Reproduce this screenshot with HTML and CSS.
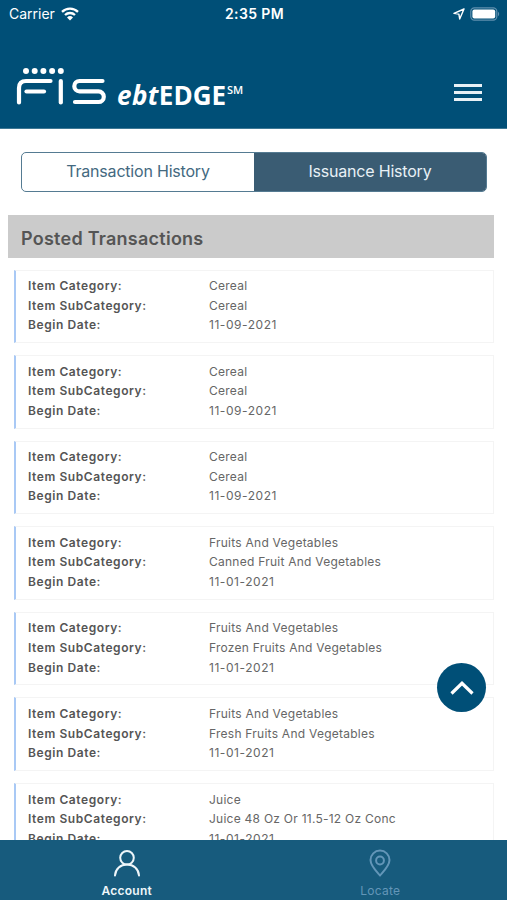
FILE: index.html
```html
<!DOCTYPE html>
<html lang="en">
<head>
    <meta charset="UTF-8">
    <meta name="viewport" content="width=device-width, initial-scale=1.0">
    <title>ebtEDGE</title>
    <link rel="stylesheet" href="styles.css">
</head>
<body>
    <header class="header">
        <div class="status-bar">
            <div class="carrier">
                <span>Carrier</span>
                <svg width="18" height="14" viewBox="0 0 18 14" fill="none" stroke="#fff" stroke-width="2.3">
                    <path d="M1 4.8a11.5 11.5 0 0 1 16 0"/>
                    <path d="M4 8a7.3 7.3 0 0 1 10 0"/>
                    <path d="M9 13.6L6 10.5a4.4 4.4 0 0 1 6 0z" fill="#fff" stroke="none"/>
                </svg>
            </div>
            <span class="time">2:35 PM</span>
            <div class="battery">
                <svg width="12" height="12" viewBox="0 0 12 12" fill="none" stroke="#fff" stroke-width="1.4" stroke-linejoin="round">
                    <path d="M11 1L1 5.4l4.9.7.8 4.9z"/>
                </svg>
                <svg width="30" height="14" viewBox="0 0 30 14">
                    <rect x=".8" y=".8" width="26" height="12.4" rx="3.6" fill="none" stroke="#5f90ae" stroke-width="1.2"/>
                    <rect x="2.4" y="2.4" width="22.8" height="9.2" rx="2" fill="#fff"/>
                    <path d="M28 4.8a2.6 2.6 0 0 1 0 4.4z" fill="#5f90ae"/>
                </svg>
            </div>
        </div>

        <div class="brand-bar">
            <div class="brand">
                <svg width="90" height="38" viewBox="0 0 90 38" fill="none" stroke="#fff" stroke-width="4.2" stroke-linecap="round" stroke-linejoin="round">
                    <g fill="#fff" stroke="none">
                        <circle cx="10" cy="4" r="3"/>
                        <circle cx="18.7" cy="4" r="3"/>
                        <circle cx="27.4" cy="4" r="3"/>
                        <circle cx="36.1" cy="4" r="3"/>
                        <circle cx="44.8" cy="4" r="3"/>
                    </g>
                    <path d="M3 35.5V21q0-7 7-7h24.500"/>
                    <path d="M10.500 24.500h17.500"/>
                    <path d="M44.800 14v21.500"/>
                    <path d="M86.500 14H63.500a5.200 5.200 0 0 0 0 10.400h19a5.200 5.200 0 0 1 0 10.600H59"/>
                </svg>
                <span class="brand-name"><em>ebt</em>EDGE<sup>SM</sup></span>
            </div>
            <div class="menu">
                <span></span>
                <span></span>
                <span></span>
            </div>
        </div>
    </header>

    <main class="content">
        <div class="tabs">
            <div class="tab">Transaction History</div>
            <div class="tab active">Issuance History</div>
        </div>

        <h2 class="section-title">Posted Transactions</h2>

        <div class="list">
            <dl class="card">
                <dt>Item Category:</dt><dd>Cereal</dd>
                <dt>Item SubCategory:</dt><dd>Cereal</dd>
                <dt>Begin Date:</dt><dd class="date">11-09-2021</dd>
            </dl>
            <dl class="card">
                <dt>Item Category:</dt><dd>Cereal</dd>
                <dt>Item SubCategory:</dt><dd>Cereal</dd>
                <dt>Begin Date:</dt><dd class="date">11-09-2021</dd>
            </dl>
            <dl class="card">
                <dt>Item Category:</dt><dd>Cereal</dd>
                <dt>Item SubCategory:</dt><dd>Cereal</dd>
                <dt>Begin Date:</dt><dd class="date">11-09-2021</dd>
            </dl>
            <dl class="card">
                <dt>Item Category:</dt><dd>Fruits And Vegetables</dd>
                <dt>Item SubCategory:</dt><dd>Canned Fruit And Vegetables</dd>
                <dt>Begin Date:</dt><dd class="date">11-01-2021</dd>
            </dl>
            <dl class="card">
                <dt>Item Category:</dt><dd>Fruits And Vegetables</dd>
                <dt>Item SubCategory:</dt><dd>Frozen Fruits And Vegetables</dd>
                <dt>Begin Date:</dt><dd class="date">11-01-2021</dd>
            </dl>
            <dl class="card">
                <dt>Item Category:</dt><dd>Fruits And Vegetables</dd>
                <dt>Item SubCategory:</dt><dd>Fresh Fruits And Vegetables</dd>
                <dt>Begin Date:</dt><dd class="date">11-01-2021</dd>
            </dl>
            <dl class="card">
                <dt>Item Category:</dt><dd>Juice</dd>
                <dt>Item SubCategory:</dt><dd>Juice 48 Oz Or 11.5-12 Oz Conc</dd>
                <dt>Begin Date:</dt><dd class="date">11-01-2021</dd>
            </dl>
        </div>
    </main>

    <!-- Back to top -->
    <button class="to-top">
        <svg width="24" height="16" viewBox="0 0 24 16" fill="none" stroke="#fff" stroke-width="3.2">
            <path d="M1.5 13.5L12 3.3l10.5 10.2"/>
        </svg>
    </button>

    <nav class="bottom-nav">
        <div class="nav-item active">
            <svg width="28" height="28" viewBox="0 0 28 28" fill="none" stroke="currentColor" stroke-width="2" stroke-linecap="round">
                <circle cx="14" cy="8.8" r="6.8"/>
                <path d="M2 26.5C2.500 20 7.500 15.600 14 15.600S25.500 20 26 26.500"/>
            </svg>
            <span>Account</span>
        </div>
        <div class="nav-item locate">
            <svg width="28" height="28" viewBox="0 0 28 28" fill="none" stroke="currentColor" stroke-width="2" stroke-linejoin="round">
                <path d="M14 26.500C11 23 4.500 17 4.500 11.100a9.500 9.500 0 0 1 19 0C23.500 17 17 23 14 26.500z"/>
                <circle cx="14" cy="11.500" r="3.900"/>
            </svg>
            <span>Locate</span>
        </div>
    </nav>
</body>
</html>
```

FILE: styles.css
```css
* {
    box-sizing: border-box;
}

body {
    font-family: Inter, 'Liberation Sans', sans-serif;
    margin: 0;
    height: 100vh;
    display: flex;
    flex-direction: column;
    overflow: hidden;
    background: #fff;
    color: #555;
}

/* Header */
.header {
    flex: none;
    height: 129px;
    background: #004f77;
    color: #fff;
    border-bottom: 1px solid #3d7895;
}

.status-bar {
    display: grid;
    grid-template-columns: 1fr auto 1fr;
    align-items: center;
    height: 27px;
    padding: 0 7px 0 9px;
    font-size: 14px;
}

.carrier,
.battery {
    display: flex;
    align-items: center;
    gap: 6px;
}

.battery {
    justify-content: flex-end;
    gap: 5px;
}

.time {
    font-weight: 600;
    letter-spacing: 0.4px;
}

.brand-bar {
    display: flex;
    justify-content: space-between;
    align-items: flex-start;
    padding: 40px 25px 0 16px;
}

.brand {
    display: flex;
    align-items: flex-start;
    gap: 11px;
}

.brand-name {
    font-family: 'Open Sans', sans-serif;
    font-size: 26px;
    font-weight: 700;
    line-height: 36px;
    margin-top: 10px;
}

.brand-name em {
    letter-spacing: 0.4px;
}

.brand-name sup {
    font-size: 11px;
    font-weight: 600;
    line-height: 0;
    vertical-align: 11px;
    margin-left: 1px;
}

.menu {
    display: flex;
    flex-direction: column;
    gap: 4px;
    width: 28px;
    margin-top: 17px;
}

.menu span {
    height: 3px;
    background: #e8f1f6;
}

/* Content */
.content {
    flex: 1;
    min-height: 0;
    overflow: hidden;
    padding: 23px 13px 0 8px;
}

.tabs {
    display: flex;
    height: 40px;
    margin: 0 7px 0 13px;
    border: 1px solid #557b92;
    border-radius: 5px;
    overflow: hidden;
}

.tab {
    flex: 1;
    text-align: center;
    font-size: 16px;
    line-height: 37px;
    letter-spacing: -0.2px;
    color: #44697f;
}

.tab.active {
    background: #3a5c73;
    color: #e8f1f6;
}

.section-title {
    height: 43px;
    margin: 23px 0 11.5px;
    padding-left: 13px;
    background: #cbcbcb;
    font-size: 18px;
    font-weight: 600;
    line-height: 48px;
    letter-spacing: 0.25px;
}

.card {
    display: grid;
    grid-template-columns: 181px 1fr;
    grid-auto-rows: 19.6px;
    height: 73.6px;
    margin: 0 0 12px 6px;
    padding: 5.5px 0 0 12px;
    border: 1px solid #f4f4f4;
    border-left: 2px solid #a9c9f5;
    font-size: 12px;
    line-height: 20px;
    letter-spacing: 0.58px;
}

.card dt {
    font-weight: 600;
}

.card dd {
    margin: 0;
    color: #666;
    letter-spacing: 0.25px;
}

.card .date {
    letter-spacing: 0.55px;
}

.to-top {
    position: absolute;
    left: 437px;
    top: 663px;
    width: 49px;
    height: 49px;
    padding: 0;
    border: none;
    border-radius: 50%;
    background: #004f77;
    display: flex;
    align-items: center;
    justify-content: center;
}

/* Bottom navigation */
.bottom-nav {
    flex: none;
    display: flex;
    height: 60px;
    background: #175b7d;
}

.nav-item {
    flex: 1;
    display: flex;
    flex-direction: column;
    align-items: center;
    padding-top: 9px;
    font-size: 12px;
    line-height: 16px;
    letter-spacing: 0.25px;
    color: #6396b8;
}

.nav-item span {
    margin-top: 6px;
}

.nav-item.active {
    color: #eef6fa;
    font-weight: 600;
}
```
